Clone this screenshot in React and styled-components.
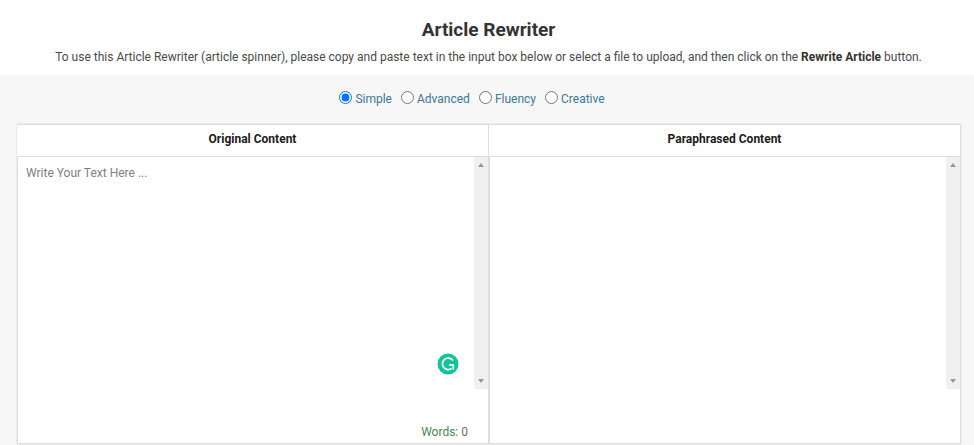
import React, { useState } from "react";
import styled, { createGlobalStyle } from "styled-components";

const GlobalStyle = createGlobalStyle`
  *, *::before, *::after { box-sizing: border-box; }
  body {
    margin: 0;
    background: #f7f7f7;
    font-family: Roboto, "Liberation Sans", sans-serif;
    font-size: 12px;
    color: #4a4a4a;
  }
`;

const Header = styled.header`
  padding: 16px 14px 9px 17px;
  background: #fff;
  text-align: center;
`;

const Title = styled.h1`
  margin: 0 0 4px;
  font-size: 19px;
  line-height: 28px;
  font-weight: 700;
  color: #333;
`;

const Intro = styled.p`
  margin: 0;
  line-height: 18px;
  strong { color: #333; }
`;

const Tool = styled.main`
  padding: 16px 12px 1px 16px;
`;

const Modes = styled.fieldset`
  display: flex;
  justify-content: center;
  gap: 9px;
  margin: 0;
  padding: 0 34px 16px 0;
  border: 0;
`;

const Mode = styled.label`
  display: flex;
  gap: 3px;
  line-height: 16px;
  color: #417896;
`;

const Radio = styled.input`
  width: 13px;
  height: 13px;
  margin: 0;
  accent-color: #0075ff;
`;

const Card = styled.section`
  display: grid;
  grid-template-columns: 1fr 1fr;
  border: 1px solid #ebebeb;
  border-radius: 3px;
  background: #fff;
`;

const Panel = styled.div`
  display: flex;
  flex-direction: column;
`;

const PanelTitle = styled.label`
  height: 33px;
  border: solid #dedede;
  border-width: 1px 1px 1px 0;
  line-height: 29px;
  text-align: center;
  font-weight: 700;
  color: #1c1c1c;
`;

const PanelBody = styled.div`
  flex: 1;
  border: solid #dedede;
  border-width: 0 1px 1px;
`;

const Editor = styled.div`
  position: relative;
  display: flex;
  height: 232px;
`;

const TextArea = styled.textarea`
  flex: 1;
  min-width: 0;
  padding: 8px;
  border: 0;
  outline: 0;
  resize: none;
  background: transparent;
  font: inherit;
  line-height: 17px;
  color: #333;
  scrollbar-width: none;
  &::placeholder { color: #808080; opacity: 1; }
`;

const ScrollTrack = styled.div`
  display: flex;
  flex-direction: column;
  justify-content: space-between;
  align-items: center;
  width: 14px;
  padding: 6px 0;
  background: #f0f0f0;
`;

const Assistant = styled.button`
  position: absolute;
  right: 29px;
  bottom: 14px;
  width: 22px;
  height: 22px;
  padding: 0;
  border: 0;
  background: none;
  cursor: pointer;
  svg { display: block; }
`;

const PanelFooter = styled.footer`
  height: 54px;
  padding: 35px 20px 0 0;
  line-height: 17px;
  text-align: right;
  color: #4b864c;
`;

const modes = ["Simple", "Advanced", "Fluency", "Creative"];

function Scrollbar() {
  return (
    <ScrollTrack aria-hidden="true">
      <svg width="6" height="4" viewBox="0 0 6 4">
        <path d="M0 4 L3 0 L6 4Z" fill="#999" />
      </svg>
      <svg width="6" height="4" viewBox="0 0 6 4">
        <path d="M0 0 L3 4 L6 0Z" fill="#999" />
      </svg>
    </ScrollTrack>
  );
}

function AssistantIcon() {
  return (
    <svg width="22" height="22" viewBox="0 0 22 22" fill="none">
      <circle cx="11" cy="11" r="10.5" fill="#15c39a" />
      <path
        d="M16 7.6 A5.8 5.8 0 1 0 14.8 15.4 M12 12 H16.3 V16.4"
        stroke="#fff"
        strokeWidth="1.6"
      />
    </svg>
  );
}

export default function App() {
  const [mode, setMode] = useState("Simple");
  const [text, setText] = useState("");
  const words = text.trim() ? text.trim().split(/\s+/).length : 0;

  return (
    <>
      <GlobalStyle />
      <Header>
        <Title>Article Rewriter</Title>
        <Intro>
          To use this Article Rewriter (article spinner), please copy and paste
          text in the input box below or select a file to upload, and then click
          on the <strong>Rewrite Article</strong> button.
        </Intro>
      </Header>
      <Tool>
        <Modes aria-label="Rewriting mode">
          {modes.map((name) => (
            <Mode key={name}>
              <Radio
                type="radio"
                name="mode"
                checked={mode === name}
                onChange={() => setMode(name)}
              />
              {name}
            </Mode>
          ))}
        </Modes>
        <Card>
          <Panel>
            <PanelTitle htmlFor="original">Original Content</PanelTitle>
            <PanelBody>
              <Editor>
                <TextArea
                  id="original"
                  placeholder="Write Your Text Here ..."
                  value={text}
                  onChange={(e) => setText(e.target.value)}
                />
                <Scrollbar />
                <Assistant type="button" aria-label="Check writing">
                  <AssistantIcon />
                </Assistant>
              </Editor>
              <PanelFooter>Words: {words}</PanelFooter>
            </PanelBody>
          </Panel>
          <Panel>
            <PanelTitle htmlFor="paraphrased">Paraphrased Content</PanelTitle>
            <PanelBody>
              <Editor>
                <TextArea id="paraphrased" readOnly />
                <Scrollbar />
              </Editor>
            </PanelBody>
          </Panel>
        </Card>
      </Tool>
    </>
  );
}
